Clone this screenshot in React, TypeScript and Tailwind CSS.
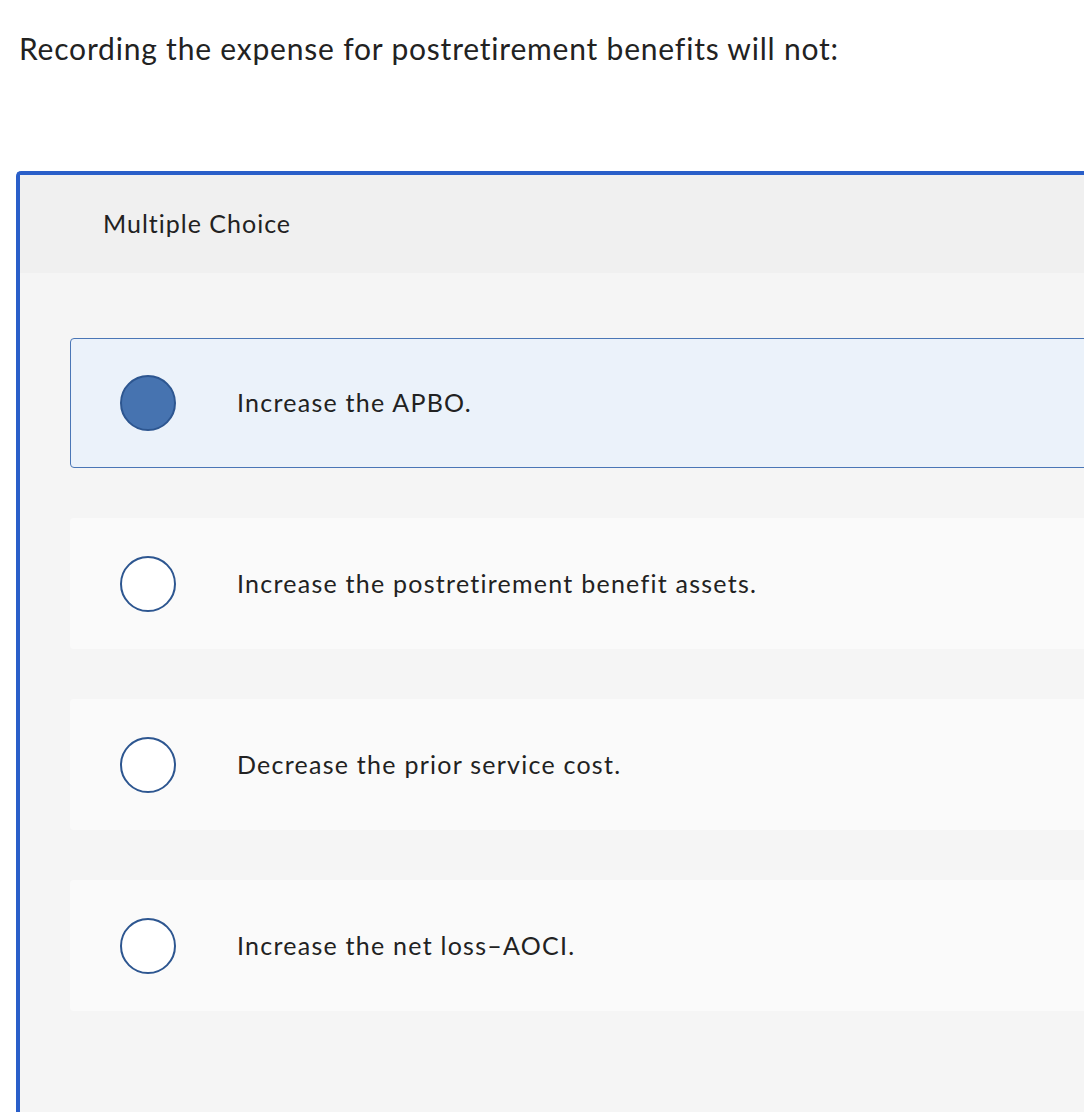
import React from "react";

const options = [
  "Increase the APBO.",
  "Increase the postretirement benefit assets.",
  "Decrease the prior service cost.",
  "Increase the net loss\u2013AOCI.",
];

export default function App() {
  const selected = 0;

  return (
    <div
      className="w-[1084px] h-[1112px] overflow-hidden bg-white text-[#222] [font-variant-ligatures:none]"
      style={{ fontFamily: "Lato, 'Liberation Sans', sans-serif" }}
    >
      {/* question */}
      <div className="pl-[19px] pt-[30px] text-[30px] leading-[36px] tracking-[0.8px]">
        Recording the expense for postretirement benefits will not:
      </div>

      {/* card */}
      <div className="ml-4 mt-[105px] w-[1120px] h-[1000px] border-l-4 border-t-4 border-[#2a5fc9] rounded-tl-[5px] bg-[#f5f5f5]">
        <div className="h-[98px] bg-[#f0f0f0] pl-[83px] flex items-center text-[25px] tracking-[1px]">
          Multiple Choice
        </div>

        <div className="pl-[50px] pt-[65px] flex flex-col gap-[50px]">
          {options.map((opt, i) => {
            const on = i === selected;
            return (
              <div
                key={i}
                className={
                  on
                    ? "h-[130px] flex items-center rounded-[4px] border border-[#4a76b6] bg-[#ebf2fa] pl-[49px]"
                    : "h-[131px] flex items-center rounded-[4px] bg-[#fafafa] pl-[50px]"
                }
              >
                <span
                  className={
                    on
                      ? "w-14 h-14 rounded-full border-2 border-[#2d5690] bg-[#4673b0] shrink-0"
                      : "w-14 h-14 rounded-full border-2 border-[#2d5690] bg-white shrink-0"
                  }
                />
                <span className="ml-[61px] text-[25px] tracking-[1.25px]">{opt}</span>
              </div>
            );
          })}
        </div>
      </div>
    </div>
  );
}
